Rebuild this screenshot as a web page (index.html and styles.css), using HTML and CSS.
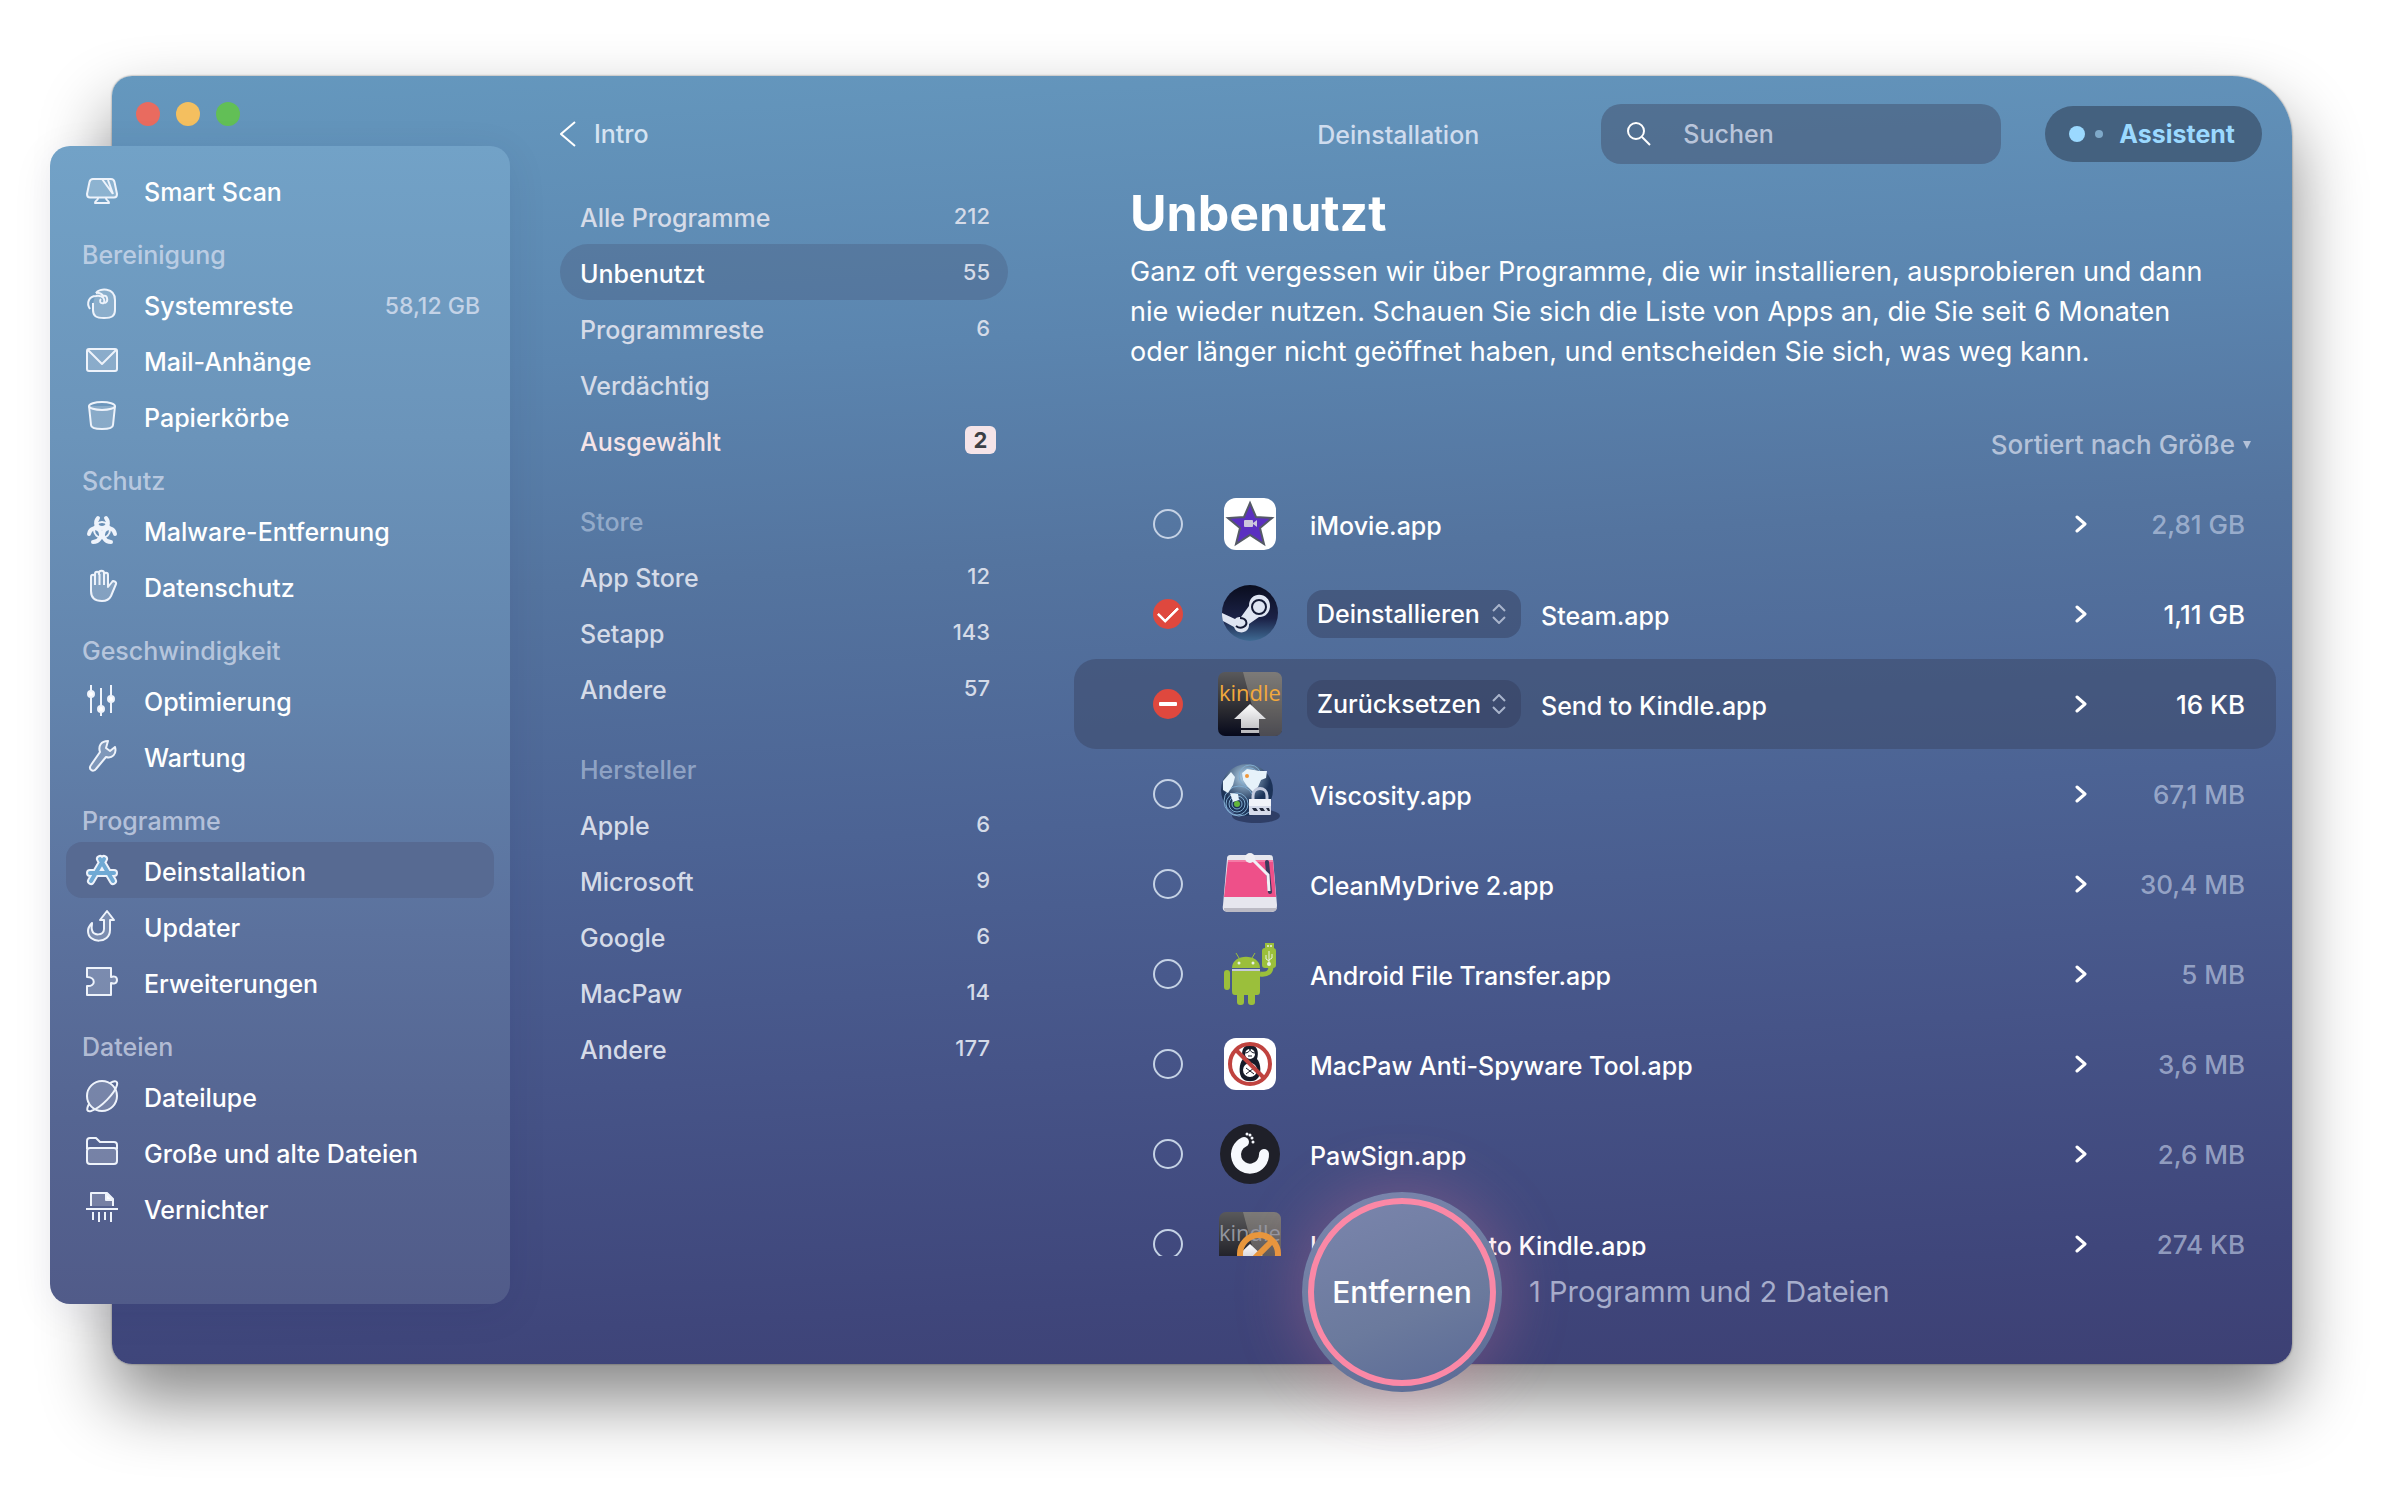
FILE: index.html
```
<!DOCTYPE html>
<html lang="de">
<head>
    <meta charset="UTF-8">
    <meta name="viewport" content="width=device-width, initial-scale=1.0">
    <title>Deinstallation</title>
    <link rel="stylesheet" href="styles.css">
</head>
<body>
    <div class="window">
        <div class="left">
            <div class="lights">
                <span class="light red"></span>
                <span class="light yellow"></span>
                <span class="light green"></span>
            </div>

            <nav class="sidebar">
                <a class="side-item" href="#">
                    <svg class="side-icon" viewBox="0 0 32 32"><path class="tint" d="M7 5h18c2 0 3 1 3.500 3L31 20c0 2-1 3.500-3 3.500H4c-2 0-3-1.500-3-3.500L3.500 8C4 6 5 5 7 5z"/><path d="M16 5l11 15M22 6l5 14M12 24c0 3-3 2-3 5h14c0-3-3-2-3-5"/></svg>
                    <span class="label">Smart Scan</span>
                </a>

                <h2>Bereinigung</h2>
                <a class="side-item" href="#">
                    <svg class="side-icon" viewBox="0 0 32 32"><path class="tint" d="M10 5c3-5 19-6 19 7v10c0 6-3 8-11 8s-11-2-11-8v-7"/><path d="M4 21C0 15 3 8 10 8c8-1 9 4 8 7-4 1-5-2-3-4"/><path d="M10 5c5-1 7 3 7 3 4-2 6 5 2 7"/></svg>
                    <span class="label">Systemreste</span>
                    <span class="side-size">58,12 GB</span>
                </a>
                <a class="side-item" href="#">
                    <svg class="side-icon" viewBox="0 0 32 32"><rect class="tint" x="1" y="5" width="30" height="22" rx="2"/><path d="M2 6l14 14L30 6"/></svg>
                    <span class="label">Mail-Anhänge</span>
                </a>
                <a class="side-item" href="#">
                    <svg class="side-icon" viewBox="0 0 32 32"><path class="tint" d="M3 6l2 19c0 3 3 4 11 4s11-1 11-4l2-19"/><ellipse cx="16" cy="6" rx="13" ry="4"/></svg>
                    <span class="label">Papierkörbe</span>
                </a>

                <h2>Schutz</h2>
                <a class="side-item" href="#">
                    <svg class="side-icon heavy" viewBox="0 0 32 32"><circle class="thin" cx="16" cy="16" r="8"/><path d="M12 4c-4 5-1 10 4 10s8-5 4-10"/><path d="M3 20c1-6 8-8 11-3s-1 11-7 11"/><path d="M29 20c-1-6-8-8-11-3s1 11 7 11"/></svg>
                    <span class="label">Malware-Entfernung</span>
                </a>
                <a class="side-item" href="#">
                    <svg class="side-icon" viewBox="0 0 32 32"><path class="tint" d="M5 16V7c0-3 4-3 4 0V4c0-3 4-3 4 0V3c0-3 5-3 5 0v2c0-3 4-3 4 0v12l4-5c1-2 5 0 4 2l-5 12c-2 4-5 5-9 5-7 0-11-3-11-10z"/><path d="M9 6v9M13.500 4v11M18 4v11"/></svg>
                    <span class="label">Datenschutz</span>
                </a>

                <h2>Geschwindigkeit</h2>
                <a class="side-item" href="#">
                    <svg class="side-icon" viewBox="0 0 32 32"><path d="M5 1v28M15 4v28M25 1v28"/><circle class="dot" cx="5" cy="10" r="3"/><circle class="dot" cx="15" cy="25" r="3"/><circle class="dot" cx="25" cy="15" r="3"/></svg>
                    <span class="label">Optimierung</span>
                </a>
                <a class="side-item" href="#">
                    <svg class="side-icon" viewBox="0 0 32 32"><path class="tint" d="M22 1c-7 0-10 5-8 11L5 25c-3 4 2 8 5 4l10-12c6 2 11-3 9-10l-5 4-4-3z"/></svg>
                    <span class="label">Wartung</span>
                </a>

                <h2>Programme</h2>
                <a class="side-item active" href="#">
                    <svg class="side-icon" viewBox="0 0 32 32"><path class="outline" d="M4 19h24M18 5L5 27M14 5l13 22"/><path class="core" d="M4 19h24M18 5L5 27M14 5l13 22"/></svg>
                    <span class="label">Deinstallation</span>
                </a>
                <a class="side-item" href="#">
                    <svg class="side-icon" viewBox="0 0 32 32"><path class="tint" d="M21 1l7 9h-4v10c0 14-22 14-22 1 0-3 1-5 4-8 0 4-1 4 0 7 1 6 12 6 12-1V10h-4z"/></svg>
                    <span class="label">Updater</span>
                </a>
                <a class="side-item" href="#">
                    <svg class="side-icon" viewBox="0 0 32 32"><path class="tint" d="M1 2h24v9c2-1 6-1 6 3s-4 4-6 3v12H1v-9c9 1 9-9 0-9z"/></svg>
                    <span class="label">Erweiterungen</span>
                </a>

                <h2>Dateien</h2>
                <a class="side-item" href="#">
                    <svg class="side-icon" viewBox="0 0 32 32"><circle class="tint" cx="16" cy="16" r="15"/><path d="M24 3c5-3 8-2 7 2-2 8-16 23-26 26-4 1-5-1-2-7"/></svg>
                    <span class="label">Dateilupe</span>
                </a>
                <a class="side-item" href="#">
                    <svg class="side-icon" viewBox="0 0 32 32"><path d="M1 13V5c0-2 1-3 3-3h6l4 4h14c2 0 3 1 3 3v4"/><rect class="tint" x="1" y="12" width="30" height="16" rx="3"/></svg>
                    <span class="label">Große und alte Dateien</span>
                </a>
                <a class="side-item" href="#">
                    <svg class="side-icon" viewBox="0 0 32 32"><path class="tint" d="M5 14V1h16l6 6v7"/><path class="dot" d="M20 1v7h7z"/><path d="M0 17h32M7 20v8M13 20v10M19 20v8M25 20v10"/></svg>
                    <span class="label">Vernichter</span>
                </a>
            </nav>
        </div>

        <div class="filters">
            <a class="back" href="#">
                <svg class="back-icon" viewBox="0 0 16 32"><path d="M15 4L1 16l14 12"/></svg>
                <span>Intro</span>
            </a>

            <nav class="filter-list">
                <a class="filter" href="#"><span class="label">Alle Programme</span><span class="count">212</span></a>
                <a class="filter active" href="#"><span class="label">Unbenutzt</span><span class="count">55</span></a>
                <a class="filter" href="#"><span class="label">Programmreste</span><span class="count">6</span></a>
                <a class="filter" href="#"><span class="label">Verdächtig</span></a>
                <a class="filter selected" href="#"><span class="label">Ausgewählt</span><span class="badge">2</span></a>

                <h2>Store</h2>
                <a class="filter" href="#"><span class="label">App Store</span><span class="count">12</span></a>
                <a class="filter" href="#"><span class="label">Setapp</span><span class="count">143</span></a>
                <a class="filter" href="#"><span class="label">Andere</span><span class="count">57</span></a>

                <h2>Hersteller</h2>
                <a class="filter" href="#"><span class="label">Apple</span><span class="count">6</span></a>
                <a class="filter" href="#"><span class="label">Microsoft</span><span class="count">9</span></a>
                <a class="filter" href="#"><span class="label">Google</span><span class="count">6</span></a>
                <a class="filter" href="#"><span class="label">MacPaw</span><span class="count">14</span></a>
                <a class="filter" href="#"><span class="label">Andere</span><span class="count">177</span></a>
            </nav>
        </div>

        <main class="content">
            <header class="topbar">
                <span class="title">Deinstallation</span>
                <label class="search">
                    <svg class="search-icon" viewBox="0 0 24 24"><circle cx="9" cy="9" r="8"/><path d="M15 15l8 8"/></svg>
                    <input type="search" placeholder="Suchen" aria-label="Suchen">
                </label>
                <button type="button" class="assistant"><span class="dot-big"></span><span class="dot-small"></span>Assistent</button>
            </header>

            <h1>Unbenutzt</h1>
            <p class="intro">Ganz oft vergessen wir über Programme, die wir installieren, ausprobieren und dann nie wieder nutzen. Schauen Sie sich die Liste von Apps an, die Sie seit 6 Monaten oder länger nicht geöffnet haben, und entscheiden Sie sich, was weg kann.</p>

            <button type="button" class="sort">Sortiert nach Größe <span class="sort-arrow"></span></button>

            <ul class="apps">
                <li class="app">
                    <input type="checkbox" id="app-imovie">
                    <svg class="app-icon" viewBox="0 0 64 64"><rect x="6" y="6" width="52" height="52" rx="12" fill="#fff"/><path d="M32 11l6 14 16 1-12 10 4 16-14-9-14 9 4-16-12-10 16-1z" fill="#5b2fc0" stroke="#555a66" stroke-width="2"/><rect x="26" y="28" width="9" height="7" rx="1" fill="#ccc8dc"/><path d="M35 31l4-3v7l-4-3z" fill="#ccc8dc"/></svg>
                    <label class="name" for="app-imovie">iMovie.app</label>
                    <svg class="more" viewBox="0 0 12 18"><path d="M2 2l8 7-8 7"/></svg>
                    <span class="size">2,81 GB</span>
                </li>
                <li class="app checked">
                    <input type="checkbox" id="app-steam" checked>
                    <svg class="app-icon" viewBox="0 0 64 64"><defs><linearGradient id="steam" x2="0" y2="1"><stop stop-color="#0a0d1e"/><stop offset=".6" stop-color="#1b2247"/><stop offset="1" stop-color="#3f6a93"/></linearGradient></defs><circle cx="32" cy="31" r="28" fill="url(#steam)"/><path d="M4 31l13 6c2-2 4-2 6-2l8-11c0-16 22-14 21 1-1 9-8 10-11 10l-10 7c1 9-12 12-15 3L5 39c-1-3-1-6-1-8z" fill="#dfe5f2"/><circle cx="41" cy="25" r="7" fill="#dfe5f2" stroke="#141a35" stroke-width="2"/><path d="M18 44c5 4 12 0 10-5-1-2-3-3-6-3" fill="none" stroke="#141a35" stroke-width="2"/></svg>
                    <span class="action">
                        <select aria-label="Aktion für Steam.app"><option>Deinstallieren</option><option>Zurücksetzen</option></select>
                        <svg class="stepper" viewBox="0 0 14 20"><path d="M1 7l6-6 6 6M1 13l6 6 6-6"/></svg>
                    </span>
                    <label class="name" for="app-steam">Steam.app</label>
                    <svg class="more" viewBox="0 0 12 18"><path d="M2 2l8 7-8 7"/></svg>
                    <span class="size">1,11 GB</span>
                </li>
                <li class="app checked current">
                    <input type="checkbox" class="partial" id="app-send" checked>
                    <svg class="app-icon" viewBox="0 0 64 64"><defs><linearGradient id="kindle" x2="0" y2="1"><stop stop-color="#59595b"/><stop offset=".6" stop-color="#2a2a30"/><stop offset="1" stop-color="#06091c"/></linearGradient><linearGradient id="arrow" x2="0" y2="1"><stop stop-color="#fff"/><stop offset="1" stop-color="#b9b9bd"/></linearGradient></defs><rect width="64" height="64" rx="7" fill="url(#kindle)"/><path d="M25 0h32c4 0 7 3 7 7v50c0 4-3 7-7 7H42z" fill="#b5b0a5" opacity=".4"/><text class="kindle-word" x="32" y="29" fill="#f3a93c">kindle</text><path d="M32 32l16 15h-7v9H23v-9h-7zM23 58h18v3H23z" fill="url(#arrow)"/></svg>
                    <span class="action">
                        <select aria-label="Aktion für Send to Kindle.app"><option>Zurücksetzen</option><option>Deinstallieren</option></select>
                        <svg class="stepper" viewBox="0 0 14 20"><path d="M1 7l6-6 6 6M1 13l6 6 6-6"/></svg>
                    </span>
                    <label class="name" for="app-send">Send to Kindle.app</label>
                    <svg class="more" viewBox="0 0 12 18"><path d="M2 2l8 7-8 7"/></svg>
                    <span class="size">16 KB</span>
                </li>
                <li class="app">
                    <input type="checkbox" id="app-viscosity">
                    <svg class="app-icon" viewBox="0 0 64 64"><defs><radialGradient id="globe" cx=".45" cy=".25"><stop stop-color="#b4d3e8"/><stop offset="1" stop-color="#1c3358"/></radialGradient></defs><ellipse cx="38" cy="54" rx="24" ry="7" fill="#1c2647" opacity=".6"/><circle cx="29" cy="28" r="26" fill="url(#globe)"/><g fill="none" stroke="#7fabd0" stroke-width="1"><circle cx="32" cy="14" r="5"/><circle cx="32" cy="14" r="8"/><circle cx="32" cy="14" r="11"/><circle cx="19" cy="42" r="5"/><circle cx="19" cy="42" r="8"/><circle cx="19" cy="42" r="11"/><circle cx="21" cy="39" r="15"/></g><path d="M24 11l5-4 7 1 5 1 8 0-1 7-5 2-3 7-5 5-6-6-4-6zM5 19l8-9 4 5-2 8-5 8-5-3zM12 31l8 1 1 6-6 2z" fill="#e6f2fa"/><circle cx="29" cy="14" r="2" fill="#f0983b"/><circle cx="19" cy="42" r="3" fill="#63b53a"/><path d="M35 38v-4c0-10 14-10 14 0v4" fill="none" stroke="#c6cde0" stroke-width="3"/><rect x="31" y="37" width="22" height="16" rx="1" fill="#d5daea"/><path d="M31 37h22v7H31z" fill="#f1f3fa"/><path d="M34 46h4l2 3h-4zM41 46h4l2 3h-4zM48 46h3l1 3h-2z" fill="#23293d"/></svg>
                    <label class="name" for="app-viscosity">Viscosity.app</label>
                    <svg class="more" viewBox="0 0 12 18"><path d="M2 2l8 7-8 7"/></svg>
                    <span class="size">67,1 MB</span>
                </li>
                <li class="app">
                    <input type="checkbox" id="app-drive">
                    <svg class="app-icon" viewBox="0 0 64 64"><path d="M13 3h38c3 0 4 1 4 4l4 46c0 5-2 7-6 7H10c-4 0-6-2-5-7L9 7c0-3 1-4 4-4z" fill="#e6e6ee"/><path d="M10 8h45l3 37H6z" fill="#ee5089"/><path d="M10 8h45v2H10z" fill="#f47ba6"/><path d="M6 56h53c-1 3-3 4-6 4H10c-3 0-4-1-4-4z" fill="#bbbac4"/><path d="M49 10l3 30" stroke="#3b3a5c" stroke-width="4" stroke-linecap="round"/><path d="M33 6l17 17 1 16" fill="none" stroke="#f1f0f6" stroke-width="3"/><circle cx="32" cy="6" r="5" fill="#eeeef3"/></svg>
                    <label class="name" for="app-drive">CleanMyDrive 2.app</label>
                    <svg class="more" viewBox="0 0 12 18"><path d="M2 2l8 7-8 7"/></svg>
                    <span class="size">30,4 MB</span>
                </li>
                <li class="app">
                    <input type="checkbox" id="app-android">
                    <svg class="app-icon" viewBox="0 0 64 64"><g fill="#9bbf3b"><path d="M14 26c0-15 28-15 28 0z"/><path d="M14 29h28v20c0 3-1 4-3 4H17c-2 0-3-1-3-4z"/><rect x="6" y="28" width="6" height="20" rx="3"/><rect x="19" y="48" width="7" height="15" rx="3"/><rect x="30" y="48" width="7" height="15" rx="3"/><rect x="44" y="6" width="14" height="20" rx="3"/><rect x="47" y="1" width="9" height="6"/></g><path d="M42 32c8 1 11-2 11-8" fill="none" stroke="#9bbf3b" stroke-width="5"/><path d="M21 16l-3-5M34 16l3-5" stroke="#9bbf3b" stroke-width="1"/><path d="M14 27h28v2H14z" fill="#c6cbd8"/><g fill="#e8f0e8"><circle cx="21" cy="21" r="1.500"/><circle cx="35" cy="21" r="1.500"/><circle cx="50" cy="4" r="1"/><circle cx="53" cy="4" r="1"/><circle cx="51" cy="22" r="2"/></g><path d="M51 9v13M48 13v4l3 2M54 12v4l-3 2" fill="none" stroke="#e8f0e8" stroke-width="1"/></svg>
                    <label class="name" for="app-android">Android File Transfer.app</label>
                    <svg class="more" viewBox="0 0 12 18"><path d="M2 2l8 7-8 7"/></svg>
                    <span class="size">5 MB</span>
                </li>
                <li class="app">
                    <input type="checkbox" id="app-spyware">
                    <svg class="app-icon" viewBox="0 0 64 64"><rect x="6" y="6" width="52" height="52" rx="12" fill="#fff"/><path d="M32 13c8 0 9 8 7 14 4 4 5 16 0 20-3 3-11 3-14 0-5-4-4-16 0-20-2-6-1-14 7-14z" fill="#161b28"/><circle cx="32" cy="22" r="5" fill="#fff"/><circle cx="32" cy="38" r="7" fill="#fff"/><path d="M27 21c3 0 5-2 5-4 0 2 2 4 5 4M30 24h4M28 36l8 6M36 36l-8 6" stroke="#161b28" stroke-width="1" fill="none"/><circle cx="32" cy="32" r="20" fill="none" stroke="#c0433f" stroke-width="4"/><path d="M18 18l28 28" stroke="#c0433f" stroke-width="4"/></svg>
                    <label class="name" for="app-spyware">MacPaw Anti-Spyware Tool.app</label>
                    <svg class="more" viewBox="0 0 12 18"><path d="M2 2l8 7-8 7"/></svg>
                    <span class="size">3,6 MB</span>
                </li>
                <li class="app">
                    <input type="checkbox" id="app-pawsign">
                    <svg class="app-icon" viewBox="0 0 64 64"><circle cx="32" cy="32" r="30" fill="#1f2029"/><path d="M26 20a14 14 0 1 0 20 12" fill="none" stroke="#f6f8fd" stroke-width="10" stroke-linecap="round"/><g fill="#f6f8fd"><circle cx="29" cy="12" r="1.500"/><circle cx="32" cy="13" r="1.500"/><circle cx="34" cy="16" r="1.500"/><circle cx="35" cy="20" r="1.500"/></g></svg>
                    <label class="name" for="app-pawsign">PawSign.app</label>
                    <svg class="more" viewBox="0 0 12 18"><path d="M2 2l8 7-8 7"/></svg>
                    <span class="size">2,6 MB</span>
                </li>
                <li class="app">
                    <input type="checkbox" id="app-uninstall">
                    <svg class="app-icon" viewBox="0 0 64 64"><rect x="1" width="62" height="64" rx="7" fill="url(#kindle)"/><path d="M25 0h31c4 0 7 3 7 7v50c0 4-3 7-7 7H42z" fill="#b5b0a5" opacity=".4"/><text class="kindle-word" x="32" y="29" fill="#94969f">kindle</text><path d="M32 32l16 15h-7v9H23v-9h-7z" fill="url(#arrow)"/><circle cx="41" cy="42" r="19" fill="none" stroke="#e8973c" stroke-width="6"/><path d="M28 55l26-26" stroke="#e8973c" stroke-width="6"/></svg>
                    <label class="name" for="app-uninstall">Uninstall Send to Kindle.app</label>
                    <svg class="more" viewBox="0 0 12 18"><path d="M2 2l8 7-8 7"/></svg>
                    <span class="size">274 KB</span>
                </li>
            </ul>

            <footer class="actions">
                <button type="button" class="remove">Entfernen</button>
                <span class="summary">1 Programm und 2 Dateien</span>
            </footer>
        </main>
    </div>
</body>
</html>
```
FILE: styles.css
```
* {
    box-sizing: border-box;
}
body {
    margin: 0;
    padding: 76px 112px 148px;
    background: #fff;
    color: #fff;
    font-family: Inter, "Liberation Sans", sans-serif;
    font-size: 25px;
    font-weight: 500;
    line-height: 32px;
}
a {
    color: inherit;
    text-decoration: none;
}
h1, h2, p, ul {
    margin: 0;
    padding: 0;
}
button, input, select {
    font: inherit;
    color: inherit;
    border: 0;
    padding: 0;
    background: none;
}
.window {
    display: grid;
    grid-template-columns: 398px 564px 1fr;
    height: calc(100vh - 224px);
    min-height: 1100px;
    border-radius: 20px 60px 20px 20px;
    background: linear-gradient(177deg, #6598be 0%, #5b85af 22%, #54749f 38%, #4c6394 57%, #465488 74%, #3f467b 91%, #3d4074 100%);
    box-shadow: 0 0 2px rgba(0, 0, 0, 0.5), 0 36px 70px rgba(0, 0, 0, 0.48);
}

/* sidebar */
.left {
    display: flex;
    flex-direction: column;
    min-height: 0;
}
.lights {
    display: flex;
    gap: 16px;
    height: 70px;
    padding: 26px 24px 0;
}
.light {
    width: 24px;
    height: 24px;
    border-radius: 50%;
}
.red {
    background: #e96b5f;
}
.yellow {
    background: #f4bf5f;
}
.green {
    background: #62bf56;
}
.sidebar {
    flex: 1;
    margin: 0 0 60px -62px;
    padding: 16px;
    border-radius: 20px;
    background: linear-gradient(#72a2c7 0%, #6b94ba 25%, #6283ac 48%, #5b719d 68%, #556592 84%, #515b89 100%);
    box-shadow: 0 8px 40px rgba(20, 30, 80, 0.08);
}
.sidebar h2 {
    padding: 22px 16px 6px;
    font-size: 25px;
    font-weight: 500;
    line-height: 30px;
    color: rgba(225, 230, 245, 0.68);
}
.side-item {
    display: flex;
    align-items: center;
    gap: 26px;
    height: 56px;
    padding: 0 14px 0 20px;
    border-radius: 16px;
}
.side-item.active {
    background: #576a92;
}
.label {
    padding-top: 4px;
}
.side-size {
    margin-left: auto;
    padding-top: 4px;
    font-size: 23px;
    color: rgba(225, 230, 245, 0.75);
}
.side-icon {
    width: 32px;
    height: 32px;
    fill: none;
    stroke: #eef3fb;
    stroke-width: 2;
    stroke-linejoin: round;
    overflow: visible;
}
.side-icon .tint {
    fill: rgba(255, 255, 255, 0.2);
}
.side-icon .dot {
    fill: #fff;
}
.side-icon.heavy {
    stroke-width: 4;
    stroke-linecap: round;
}
.side-icon .thin {
    stroke-width: 2;
}
.side-icon .outline {
    stroke-width: 8;
    stroke-linecap: round;
}
.side-icon .core {
    stroke: #6fa9d4;
    stroke-width: 4;
    stroke-linecap: round;
}

/* filter column */
.filters {
    padding: 28px 66px 0 50px;
}
.back {
    display: flex;
    align-items: center;
    gap: 18px;
    height: 60px;
    color: #d5e3f2;
}
.back-icon {
    width: 16px;
    height: 32px;
    fill: none;
    stroke: #fff;
    stroke-width: 2;
}
.filter-list {
    margin-top: 24px;
}
.filter {
    display: flex;
    align-items: center;
    justify-content: space-between;
    height: 56px;
    padding: 0 18px 0 20px;
    border-radius: 28px;
    color: #d5dbe8;
}
.filter.active {
    color: #fff;
    background: rgba(75, 95, 130, 0.4);
}
.filter.selected {
    color: #f5e4e8;
    padding-right: 12px;
}
.count {
    font-size: 22px;
    color: #d5dbe8;
}
.badge {
    width: 31px;
    border-radius: 6px;
    background: #f5e4e8;
    color: #3c3f45;
    font-size: 22px;
    font-weight: 700;
    line-height: 28px;
    text-align: center;
}
.filter-list h2 {
    margin-top: 24px;
    padding: 4px 20px 0;
    font-size: 25px;
    font-weight: 500;
    line-height: 52px;
    color: rgba(200, 215, 235, 0.55);
}

/* content */
.content {
    display: flex;
    flex-direction: column;
    min-height: 0;
    padding: 28px 16px 0 0;
}
.topbar {
    display: flex;
    align-items: center;
    justify-content: flex-end;
    height: 60px;
    padding-right: 14px;
}
.title {
    margin-right: 122px;
    padding-top: 2px;
    color: #cfdcee;
}
.search {
    display: flex;
    align-items: center;
    gap: 32px;
    width: 400px;
    height: 60px;
    margin-right: 44px;
    padding: 0 26px;
    border-radius: 20px;
    background: rgba(70, 85, 115, 0.55);
}
.search-icon {
    flex: none;
    width: 24px;
    height: 24px;
    fill: none;
    stroke: #fff;
    stroke-width: 2;
}
.search input {
    min-width: 0;
    flex: 1;
    outline: none;
}
.search input::placeholder {
    color: #b9c5da;
    opacity: 1;
}
.assistant {
    display: flex;
    align-items: center;
    height: 56px;
    padding: 0 27px 0 24px;
    border-radius: 28px;
    background: #44617f;
    color: #9bd9ff;
    font-weight: 700;
}
.dot-big {
    width: 16px;
    height: 16px;
    margin-right: 10px;
    border-radius: 50%;
    background: #9bd9ff;
}
.dot-small {
    width: 8px;
    height: 8px;
    margin-right: 16px;
    border-radius: 50%;
    background: #7fa9c9;
}
h1 {
    margin: 20px 0 10px 56px;
    font-size: 50px;
    font-weight: 700;
    line-height: 58px;
}
.intro {
    max-width: 1156px;
    padding-left: 56px;
    font-size: 27px;
    font-weight: 400;
    line-height: 40px;
}
.sort {
    display: flex;
    align-items: center;
    align-self: flex-end;
    gap: 8px;
    margin: 57px 25px 18px 0;
    font-size: 26px;
    color: #b4c2d9;
}
.sort-arrow {
    border: 4px solid transparent;
    border-top: 8px solid #b4c2d9;
    border-bottom: 0;
}
.apps {
    flex: 1;
    min-height: 0;
    overflow: hidden;
    list-style: none;
}
.app {
    display: flex;
    align-items: center;
    height: 90px;
    padding: 0 31px 0 79px;
    border-radius: 22px;
}
.app.current {
    background: rgba(60, 72, 105, 0.55);
}
.app input {
    display: grid;
    place-items: center;
    width: 30px;
    height: 30px;
    margin: 0 35px 0 0;
    border: 2px solid #c5d2e5;
    border-radius: 50%;
    appearance: none;
}
.app input:checked {
    border: 0;
    background: #df483e;
}
.app input:checked::after {
    content: "";
    width: 17px;
    height: 9px;
    margin-bottom: 4px;
    border: solid #fff;
    border-width: 0 0 3px 3px;
    border-radius: 1px;
    transform: rotate(-45deg);
}
.app input.partial:checked::after {
    width: 18px;
    height: 0;
    margin: 0;
    border-width: 0 0 4px;
    transform: none;
}
.app-icon {
    width: 64px;
    height: 64px;
    margin-right: 25px;
}
.kindle-word {
    font-family: "Open Sans", sans-serif;
    font-size: 22px;
    font-weight: 500;
    text-anchor: middle;
}
.action {
    position: relative;
    margin-right: 17px;
}
.action select {
    display: block;
    width: 214px;
    height: 48px;
    padding: 0 10px;
    border-radius: 16px;
    background: rgba(50, 60, 90, 0.45);
    appearance: none;
}
.stepper {
    position: absolute;
    top: 14px;
    right: 15px;
    width: 14px;
    height: 20px;
    fill: none;
    stroke: #a9b4cb;
    stroke-width: 2;
    pointer-events: none;
}
.name {
    flex: 1;
    padding: 4px 0 0 3px;
}
.more {
    width: 12px;
    height: 18px;
    fill: none;
    stroke: #fff;
    stroke-width: 3;
    stroke-linecap: round;
    stroke-linejoin: round;
}
.size {
    width: 158px;
    padding-top: 2px;
    font-size: 26px;
    text-align: right;
    color: rgba(200, 212, 235, 0.62);
}
.checked .size {
    color: #fff;
}
.actions {
    display: flex;
    align-items: center;
    gap: 27px;
    height: 108px;
    padding: 0 0 36px 228px;
    position: relative;
}
.remove {
    position: relative;
    flex: none;
    width: 200px;
    height: 200px;
    border-radius: 50%;
    background: linear-gradient(160deg, #7c86ae, #6b7a9d 60%, #586895);
    box-shadow: 0 0 64px 4px rgba(235, 120, 155, 0.3);
    font-size: 30px;
}
.remove::before {
    content: "";
    position: absolute;
    inset: 6px;
    border: 6px solid #fb88a6;
    border-radius: 50%;
}
.summary {
    font-size: 29px;
    font-weight: 400;
    color: #a6adcb;
}
```
